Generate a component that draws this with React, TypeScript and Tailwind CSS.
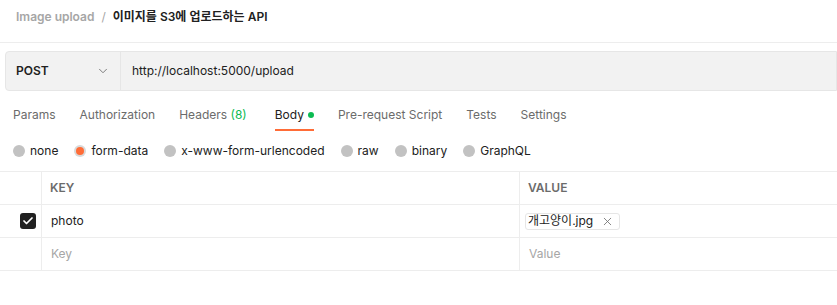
import { ChevronDown, Check, X } from 'lucide-react'

const tabs = ['Params', 'Authorization', 'Headers', 'Body', 'Pre-request Script', 'Tests', 'Settings']
const bodyTypes = ['none', 'form-data', 'x-www-form-urlencoded', 'raw', 'binary', 'GraphQL']

export default function App() {
  return (
    <div
      className="w-[837px] h-[305px] bg-white overflow-hidden text-[12px] leading-[16px] text-[#212121]"
      style={{ fontFamily: 'Inter, "Noto Sans CJK KR", sans-serif' }}
    >
      {/* 브레드크럼 */}
      <div className="h-[43px] border-b border-[#ededed] flex items-center px-4 pb-[8px] gap-[7px]">
        <span className="text-[#a6a6a6] font-semibold">Image upload</span>
        <span className="text-[#a6a6a6]">/</span>
        <span className="font-semibold text-[#212121]">이미지를 S3에 업로드하는 API</span>
      </div>

      {/* URL 바 */}
      <div className="mt-[8px] ml-[5px] h-[40px] flex bg-[#f2f2f2] border border-[#e6e6e6] rounded-l-[4px]">
        <div className="w-[115px] flex items-center justify-between pl-[10px] pr-[10px] border-r border-[#e6e6e6]">
          <span className="font-semibold text-[#212121]">POST</span>
          <ChevronDown className="w-[14px] h-[14px] text-[#6b6b6b]" strokeWidth={1.5} />
        </div>
        <div className="flex items-center pl-[11px] text-[#212121]">http://localhost:5000/upload</div>
      </div>

      {/* 탭 */}
      <div className="flex pl-[13px] gap-[24px]">
        {tabs.map(t => (
          <div
            key={t}
            className={`relative flex items-center pt-[16px] pb-[8px] ${t === 'Body' ? 'ml-[4px] text-[#212121]' : 'text-[#6b6b6b]'}`}
          >
            {t === 'Headers' ? (
              <span>
                Headers <span className="text-[#0cbb52]">(8)</span>
              </span>
            ) : (
              <span>{t}</span>
            )}
            {t === 'Body' && (
              <>
                <span className="ml-[4px] w-[6px] h-[6px] rounded-full bg-[#0cbb52]" />
                <span className="absolute left-0 right-0 bottom-0 h-[2px] bg-[#ff6c37]" />
              </>
            )}
          </div>
        ))}
      </div>

      {/* 바디 타입 */}
      <div className="flex items-center pl-[13px] pt-[12px] pb-[12px]">
        {bodyTypes.map(b => (
          <div key={b} className="flex items-center mr-[16px]">
            {b === 'form-data' ? (
              <span className="w-[12px] h-[12px] rounded-full bg-[#d9d9d9] flex items-center justify-center">
                <span className="w-[8px] h-[8px] rounded-full bg-[#ff6c37]" />
              </span>
            ) : (
              <span className="w-[12px] h-[12px] rounded-full bg-[#c2c2c2]" />
            )}
            <span className="ml-[5px] text-[#212121]">{b}</span>
          </div>
        ))}
      </div>

      {/* 폼 데이터 테이블 */}
      <div className="border-t border-[#ededed]">
        <div className="h-[33px] flex border-b border-[#ededed]">
          <div className="w-[42px] border-r border-[#ededed]" />
          <div className="w-[478px] border-r border-[#ededed] flex items-center pl-[8px] font-semibold text-[#6b6b6b]">
            KEY
          </div>
          <div className="flex-1 flex items-center pl-[8px] font-semibold text-[#6b6b6b]">VALUE</div>
        </div>
        <div className="h-[33px] flex border-b border-[#ededed]">
          <div className="w-[42px] border-r border-[#ededed] flex items-center justify-end pr-[5px]">
            <span className="w-[16px] h-[16px] rounded-[3px] bg-[#212121] flex items-center justify-center">
              <Check className="w-[12px] h-[12px] text-white" strokeWidth={3.5} />
            </span>
          </div>
          <div className="w-[478px] border-r border-[#ededed] flex items-center pl-[9px] text-[#212121]">photo</div>
          <div className="flex-1 flex items-center pl-[5px]">
            <span className="h-[17px] flex items-center border border-[#e6e6e6] rounded-[3px] pl-[2px] pr-[5px] text-[#212121]">
              개고양이.jpg
              <X className="ml-[8px] w-[13px] h-[13px] text-[#6b6b6b]" strokeWidth={1.5} />
            </span>
          </div>
        </div>
        <div className="h-[33px] flex border-b border-[#ededed]">
          <div className="w-[42px] border-r border-[#ededed]" />
          <div className="w-[478px] border-r border-[#ededed] flex items-center pl-[9px] text-[#a6a6a6]">Key</div>
          <div className="flex-1 flex items-center pl-[9px] text-[#a6a6a6]">Value</div>
        </div>
      </div>
    </div>
  )
}
